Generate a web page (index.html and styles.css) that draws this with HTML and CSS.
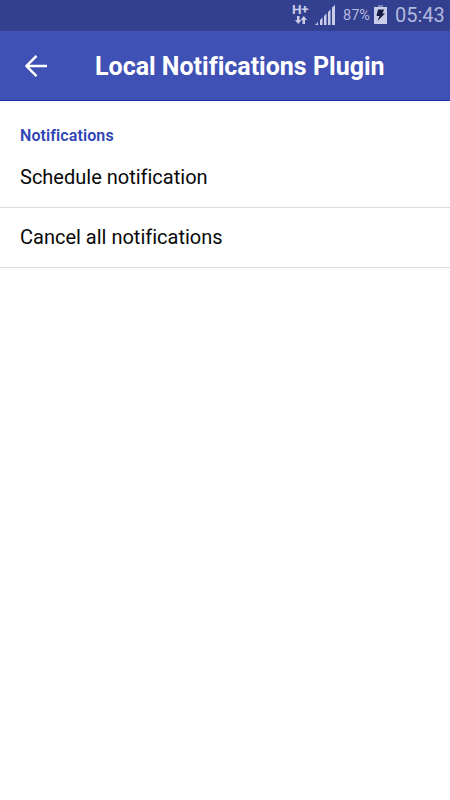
FILE: index.html
```html
<!DOCTYPE html>
<html lang="en">
<head>
<meta charset="utf-8">
<title>Local Notifications Plugin</title>
<link rel="stylesheet" href="styles.css">
</head>
<body>
<div class="status">
  <div class="network">
    <span class="network-type">H+</span>
    <svg class="transfer" width="12" height="8" viewBox="0 0 12 8"><path d="M2 0h2.500v4h2L3.250 8 0 4h2zM7.500 8V4h-2l3.250-4L12 4h-2v4z"/></svg>
  </div>
  <svg class="signal" width="20" height="20" viewBox="0 0 20 20"><path d="M0 20l3-3v3zM5 20v-5l2.500-2.500V20zM9 20v-9l2.500-2.500V20zM13 20V7l2.500-2.500V20zM17 20V2.500L20 0v20z"/></svg>
  <span class="percent">87%</span>
  <svg class="battery" width="13" height="19" viewBox="0 0 13 19"><path class="nub" d="M4 0h5v2H4z"/><path d="M0 2h13v17H0z"/><path class="bolt" d="M4 4.500h6L8.500 8.500H11L3.500 16 5.500 11H2.500z"/></svg>
  <time class="clock">05:43</time>
</div>
<header class="toolbar">
  <svg class="back" width="22" height="22" viewBox="0 0 22 22"><path d="M11.500 .8 1.500 11l10 10.200M1.500 11H22"/></svg>
  <h1 class="title">Local Notifications Plugin</h1>
</header>
<main>
  <h2 class="section">Notifications</h2>
  <ul class="list">
    <li class="row">Schedule notification</li>
    <li class="row">Cancel all notifications</li>
  </ul>
</main>
</body>
</html>
```
FILE: styles.css
```css
* { box-sizing: border-box; }
body {
  margin: 0;
  min-height: 800px;
  background: #fff;
  color: #090909;
  font-family: Roboto, sans-serif;
  font-variant-ligatures: none;
}
.status {
  display: flex;
  align-items: flex-start;
  height: 31px;
  padding-left: 292px;
  background: #333f8f;
  color: #c8cce8;
}
.status svg { display: block; fill: #c8cce8; flex: none; }
.network { width: 17px; padding-top: 3px; }
.network-type {
  display: block;
  height: 13px;
  font-size: 13.5px;
  line-height: 13px;
  font-weight: 700;
  letter-spacing: -.4px;
}
.status .transfer { margin-left: 3px; }
.signal { margin: 5px 0 0 6px; }
.percent {
  width: 28px;
  margin: 7px 0 0 8px;
  font-size: 14.5px;
  line-height: 18px;
  color: #b3b9dc;
}
.battery { margin: 5px 0 0 3px; }
.status .nub { fill: #7982b9; }
.status .bolt { fill: #141a43; }
.clock {
  margin: 3px 0 0 8px;
  font-size: 20px;
  line-height: 24px;
  color: #b3b9dc;
}
.toolbar {
  display: flex;
  align-items: center;
  height: 70px;
  padding-left: 25px;
  background: #3f51b5;
  border-bottom: 1px solid #1732a3;
}
.back { fill: none; stroke: #fff; stroke-width: 2.4; }
.title {
  margin: 2px 0 0 48px;
  color: #fff;
  font-size: 25px;
  line-height: 30px;
  font-weight: 700;
  white-space: nowrap;
}
.section {
  margin: 0;
  padding: 25px 20px 0;
  height: 47px;
  color: #2f45b5;
  font-size: 16px;
  line-height: 20px;
  font-weight: 600;
  letter-spacing: .1px;
}
.list { list-style: none; margin: 0; padding: 0; }
.row {
  display: flex;
  align-items: center;
  height: 60px;
  padding: 0 20px 2px;
  border-bottom: 1px solid #dcdcdc;
  font-size: 20px;
}
```
